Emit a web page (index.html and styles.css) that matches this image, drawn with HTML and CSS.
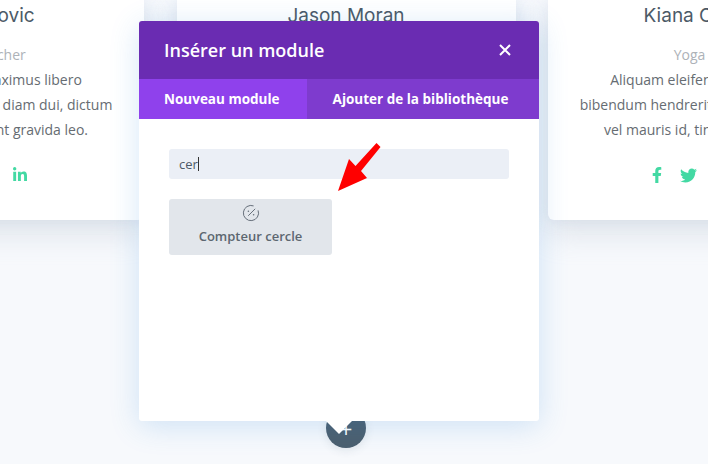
FILE: index.html
```html
<!DOCTYPE html>
<html lang="fr">
<head>
  <meta charset="UTF-8" />
  <meta name="viewport" content="width=device-width, initial-scale=1.0"/>
  <title>Insérer un module</title>
  <link rel="stylesheet" href="styles.css">
</head>
<body>

  <div class="team">

    <div class="card">
      <h3>Ana Jankovic</h3>
      <p class="role">History Teacher</p>
      <p class="bio">Aliquam eleifend maximus libero<br>bibendum hendrerit erat diam dui, dictum<br>vel mauris id, tincidunt gravida leo.</p>
      <div class="social social-left">
        <svg class="ic" viewBox="0 0 448 512"><path d="M100.28 448H7.4V148.9h92.88zM53.79 108.1C24.09 108.1 0 83.5 0 53.8a53.79 53.79 0 0 1 107.58 0c0 29.7-24.1 54.3-53.79 54.3zM447.9 448h-92.68V302.4c0-34.7-.7-79.2-48.29-79.2-48.29 0-55.69 37.7-55.69 76.7V448h-92.78V148.9h89.08v40.8h1.3c12.4-23.5 42.69-48.3 87.88-48.3 94 0 111.28 61.9 111.28 142.3V448z"/></svg>
      </div>
    </div>

    <div class="card">
      <h3>Jason Moran</h3>
      <p class="role">Art Teacher</p>
      <p class="bio">Aliquam eleifend maximus libero<br>bibendum hendrerit erat diam dui, dictum<br>vel mauris id, tincidunt gravida leo.</p>
    </div>

    <div class="card">
      <h3>Kiana Chambers</h3>
      <p class="role">Yoga Teacher</p>
      <p class="bio">Aliquam eleifend maximus libero<br>bibendum hendrerit erat diam dui, dictum<br>vel mauris id, tincidunt gravida leo.</p>
      <div class="social social-right">
        <svg class="ic" viewBox="0 0 320 512"><path d="M279.14 288l14.22-92.66h-88.91v-60.13c0-25.35 12.42-50.06 52.24-50.06h40.42V6.26S260.43 0 225.36 0c-73.22 0-121.08 44.38-121.08 124.72v70.62H22.89V288h81.39v224h100.17V288z"/></svg>
        <svg class="ic ic-bird" viewBox="0 0 512 512"><path d="M459.37 151.716c.325 4.548.325 9.097.325 13.645 0 138.72-105.583 298.558-298.558 298.558-59.452 0-114.68-17.219-161.137-47.106 8.447.974 16.568 1.299 25.34 1.299 49.055 0 94.213-16.568 130.274-44.832-46.132-.975-84.792-31.188-98.112-72.772 6.498.974 12.995 1.624 19.818 1.624 9.421 0 18.843-1.3 27.614-3.573-48.081-9.747-84.143-51.98-84.143-102.985v-1.299c13.969 7.797 30.214 12.67 47.431 13.319-28.264-18.843-46.781-51.005-46.781-87.391 0-19.492 5.197-37.36 14.294-52.954 51.655 63.675 129.3 105.258 216.365 109.807-1.624-7.797-2.599-15.918-2.599-24.04 0-57.828 46.782-104.934 104.934-104.934 30.213 0 57.502 12.67 76.67 33.137 23.715-4.548 46.456-13.32 66.599-25.34-7.798 24.366-24.366 44.833-46.132 57.827 21.117-2.273 41.584-8.122 60.426-16.243-14.292 20.791-32.161 39.308-52.628 54.253z"/></svg>
      </div>
    </div>

  </div>

  <button class="add-btn" aria-label="Ajouter">+</button>

  <div class="modal">
    <div class="modal-head">
      <h2>Insérer un module</h2>
      <svg class="close" viewBox="0 0 12 12"><path d="M1 1l10 10M11 1L1 11"/></svg>
    </div>
    <div class="tabs">
      <div class="tab tab-active">Nouveau module</div>
      <div class="tab tab-lib">Ajouter de la bibliothèque</div>
    </div>
    <div class="modal-body">
      <div class="search">cer<span class="caret"></span></div>
      <div class="tile">
        <svg class="tile-icon" viewBox="0 0 18 18">
          <path d="M11.6 1.9A7.6 7.6 0 1 0 16.1 6.4"/>
          <path d="M13.2 4.8L6.2 11.8"/>
          <circle class="dot" cx="6.4" cy="7.2" r="0.8"/>
          <circle class="dot" cx="11.6" cy="10.8" r="0.8"/>
        </svg>
        <span>Compteur cercle</span>
      </div>
    </div>
    <div class="notch"></div>
  </div>

  <svg class="arrow" viewBox="0 0 708 464"><polygon points="376.5,143 380.5,147 361,171 367,178 338,191 349,159 355.5,166"/></svg>

</body>
</html>
```

FILE: styles.css
```css
html, body {
  height: 100%;
}

body {
  margin: 0;
  background: #f7f9fc;
  font-family: "Open Sans", sans-serif;
  overflow: hidden;
  position: relative;
}

.team {
  display: flex;
  gap: 32.5px;
  margin-left: -195px;
  width: 1100px;
}

.card {
  width: 339px;
  flex: none;
  height: 220px;
  box-sizing: border-box;
  background: white;
  border-radius: 0 0 6px 6px;
  box-shadow: 0 14px 30px rgba(170,182,198,0.32), 0 0 14px rgba(200,214,232,0.35);
  text-align: center;
  padding-top: 3px;
}

h3 {
  margin: 0;
  font-family: Inter, sans-serif;
  font-size: 19px;
  font-weight: 400;
  line-height: 26px;
  color: #4c5a67;
  white-space: nowrap;
}

.role {
  margin: 13px 0 0;
  font-size: 14px;
  line-height: 25px;
  color: #adb2b8;
}

.bio {
  margin: 0;
  font-size: 14px;
  line-height: 25px;
  color: #666c72;
  white-space: nowrap;
}

.social {
  display: flex;
  gap: 18px;
  justify-content: center;
  margin-top: 23px;
  align-items: center;
  height: 20px;
}

.social-left {
  padding-left: 90px;
}

.social-right {
  justify-content: flex-start;
  padding-left: 104px;
}

.ic {
  height: 16px;
  fill: #43d9a3;
}

.ic-bird {
  height: 17px;
}

.modal {
  position: absolute;
  left: 139px;
  top: 21px;
  width: 400px;
  height: 400px;
  background: white;
  border-radius: 3px;
  box-shadow: 0 5px 30px rgba(43,135,218,0.2);
  display: flex;
  flex-direction: column;
}

.modal-head {
  height: 58px;
  flex: none;
  background: #6a2cb2;
  border-radius: 3px 3px 0 0;
  display: flex;
  align-items: center;
  justify-content: space-between;
  padding: 0 28px 0 25px;
}

h2 {
  margin: 0;
  font-size: 18px;
  font-weight: 600;
  color: white;
}

.close {
  width: 12px;
  height: 12px;
  stroke: white;
  stroke-width: 2;
  fill: none;
}

.tabs {
  display: flex;
  height: 40px;
  flex: none;
  background: #7e3bce;
}

.tab {
  flex: 1;
  font-size: 13.5px;
  font-weight: 700;
  color: white;
  line-height: 40px;
  text-align: center;
}

.tab-lib {
  padding-right: 5px;
}

.tab-active {
  flex: none;
  width: 168px;
  box-sizing: border-box;
  padding-left: 25px;
  text-align: left;
  background: #8f41ec;
}

.modal-body {
  padding: 30px;
}

.search {
  height: 30px;
  background: #ebeff6;
  border-radius: 3px;
  box-sizing: border-box;
  padding-left: 10px;
  font-size: 13px;
  line-height: 30px;
  color: #4c5a67;
  display: flex;
  align-items: center;
}

.caret {
  width: 1px;
  height: 14px;
  background: #333;
}

.tile {
  width: 163px;
  height: 56px;
  margin-top: 20px;
  background: #e2e6eb;
  border-radius: 3px;
  display: flex;
  flex-direction: column;
  align-items: center;
  padding-top: 5px;
  box-sizing: border-box;
  font-size: 13px;
  font-weight: 600;
  color: #5c6670;
}

.tile-icon {
  width: 18px;
  height: 18px;
  margin-bottom: 5px;
  fill: none;
  stroke: #666f7a;
  stroke-width: 1;
}

.dot {
  fill: #666f7a;
  stroke: none;
}

.notch {
  position: absolute;
  left: 187px;
  top: 400px;
  width: 0;
  height: 0;
  border-left: 13px solid transparent;
  border-right: 13px solid transparent;
  border-top: 13px solid white;
}

.add-btn {
  position: absolute;
  left: 326px;
  top: 408px;
  width: 40px;
  height: 40px;
  padding: 0;
  border: none;
  border-radius: 50%;
  background: #4c5f6e;
  color: white;
  font-family: "Open Sans", sans-serif;
  font-size: 22px;
  line-height: 40px;
  box-shadow: 0 2px 10px rgba(60,80,100,0.12);
}

.arrow {
  position: absolute;
  left: 0;
  top: 0;
  width: 708px;
  height: 464px;
  fill: #ff0000;
}
```
